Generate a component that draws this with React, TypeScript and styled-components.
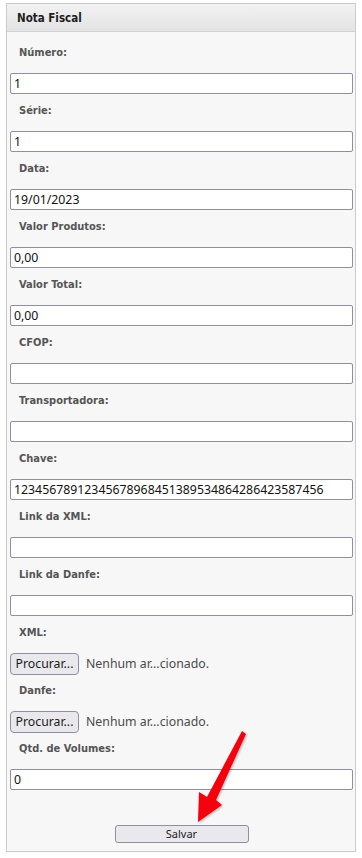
import React from 'react';
import styled, { createGlobalStyle } from 'styled-components';

const GlobalStyle = createGlobalStyle`
  html, body {
    margin: 0;
    padding: 0;
    background: #ffffff;
  }
  * {
    box-sizing: border-box;
  }
`;

const Page = styled.div`
  position: relative;
  padding: 3px 6px 0 6px;
  width: 362px;
`;

const Panel = styled.div`
  width: 350px;
  border: 1px solid #cbcbcb;
  background: #f7f7f7;
`;

const Header = styled.div`
  height: 28px;
  display: flex;
  align-items: center;
  padding-left: 10px;
  background: linear-gradient(#f2f2f2, #e3e3e3);
  border-bottom: 1px solid #d2d2d2;
  font-family: 'DejaVu Sans Condensed', 'DejaVu Sans', sans-serif;
  font-stretch: condensed;
  font-weight: bold;
  font-size: 11.5px;
  color: #1e1e1e;
`;

const Body = styled.div`
  display: flex;
  flex-direction: column;
  padding: 4px 2px 8px 3px;
`;

const Field = styled.div`
  display: flex;
  flex-direction: column;
`;

const Label = styled.label`
  display: block;
  padding: 10px 0 13px 9px;
  line-height: 14px;
  font-family: 'DejaVu Sans Condensed', 'DejaVu Sans', sans-serif;
  font-stretch: condensed;
  font-weight: bold;
  font-size: 11px;
  color: #555555;
`;

const TextInput = styled.input`
  width: 343px;
  height: 21px;
  margin: 0;
  padding: 0 3px;
  border: 1px solid #8f8f9d;
  border-radius: 2px;
  background: #ffffff;
  font-family: 'Noto Sans', 'Open Sans', sans-serif;
  font-size: 12.3px;
  color: #111111;
  outline: none;
`;

const FileRow = styled.div`
  display: flex;
  align-items: center;
  gap: 7px;
  height: 21px;
`;

const FileButton = styled.button`
  width: 69px;
  height: 22px;
  padding: 0;
  border: 1px solid #8f8f9d;
  border-radius: 4px;
  background: #e9e9ed;
  font-family: 'Noto Sans', 'Open Sans', sans-serif;
  font-size: 12.3px;
  color: #1b1b1b;
`;

const FileName = styled.span`
  font-family: 'Noto Sans', 'Open Sans', sans-serif;
  font-size: 12.3px;
  color: #4a4a4a;
`;

const Actions = styled.div`
  display: flex;
  justify-content: center;
  padding-top: 35px;
`;

const SaveButton = styled.button`
  width: 134px;
  height: 18px;
  padding: 0;
  border: 1px solid #8f8f9d;
  border-radius: 3px;
  background: #e9e9ed;
  font-family: 'Noto Sans', 'Open Sans', sans-serif;
  font-size: 11px;
  line-height: 16px;
  color: #1b1b1b;
`;

const Arrow = styled.svg`
  position: absolute;
  left: 0;
  top: 0;
  pointer-events: none;
`;

const fields: { label: string; value: string }[] = [
  { label: 'Número:', value: '1' },
  { label: 'Série:', value: '1' },
  { label: 'Data:', value: '19/01/2023' },
  { label: 'Valor Produtos:', value: '0,00' },
  { label: 'Valor Total:', value: '0,00' },
  { label: 'CFOP:', value: '' },
  { label: 'Transportadora:', value: '' },
  { label: 'Chave:', value: '12345678912345678968451389534864286423587456' },
  { label: 'Link da XML:', value: '' },
  { label: 'Link da Danfe:', value: '' },
];

const files = ['XML:', 'Danfe:'];

export default function App() {
  return (
    <>
      <GlobalStyle />
      <Page>
        <Panel>
          <Header>Nota Fiscal</Header>
          <Body>
            {fields.map((f) => (
              <Field key={f.label}>
                <Label>{f.label}</Label>
                <TextInput defaultValue={f.value} />
              </Field>
            ))}
            {files.map((name) => (
              <Field key={name}>
                <Label>{name}</Label>
                <FileRow>
                  <FileButton>Procurar...</FileButton>
                  <FileName>Nenhum ar...cionado.</FileName>
                </FileRow>
              </Field>
            ))}
            <Field>
              <Label>Qtd. de Volumes:</Label>
              <TextInput defaultValue="0" />
            </Field>
            <Actions>
              <SaveButton>Salvar</SaveButton>
            </Actions>
          </Body>
        </Panel>
        <Arrow width="362" height="858" viewBox="0 0 362 858">
          <defs>
            <filter id="shadow" x="-20%" y="-20%" width="140%" height="140%">
              <feDropShadow dx="1" dy="1" stdDeviation="1" floodColor="#000" floodOpacity="0.3" />
            </filter>
          </defs>
          <polygon
            points="242,731 246,734 216,800 222,805 198,822 199,792 207,797"
            fill="#f5060b"
            filter="url(#shadow)"
          />
        </Arrow>
      </Page>
    </>
  );
}
